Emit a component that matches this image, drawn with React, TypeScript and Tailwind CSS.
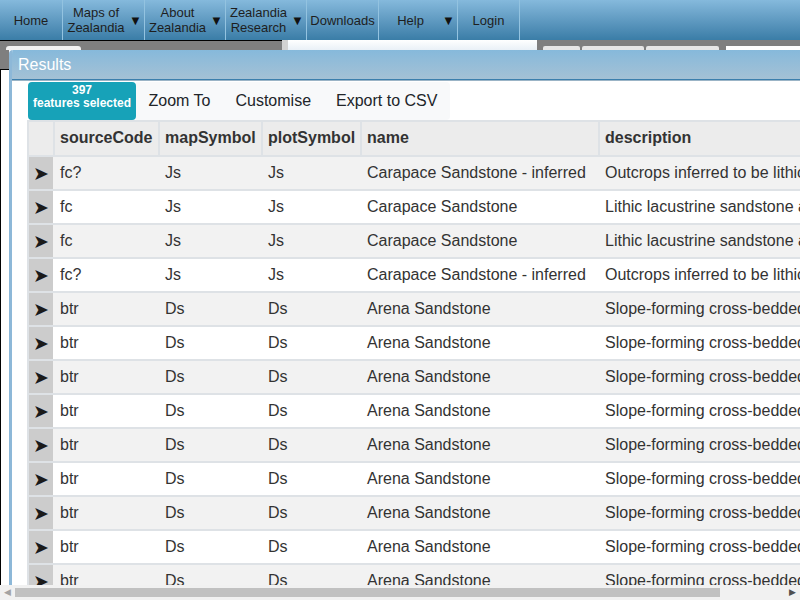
import React from "react";

type NavItem = { lines: string[]; arrow: boolean; width: string };

const navItems: NavItem[] = [
  { lines: ["Home"], arrow: false, width: "w-[63px]" },
  { lines: ["Maps of", "Zealandia"], arrow: true, width: "w-[82px]" },
  { lines: ["About", "Zealandia"], arrow: true, width: "w-[81px]" },
  { lines: ["Zealandia", "Research"], arrow: true, width: "w-[81px]" },
  { lines: ["Downloads"], arrow: false, width: "w-[72px]" },
  { lines: ["Help"], arrow: true, width: "w-[79px]" },
  { lines: ["Login"], arrow: false, width: "w-[62px]" },
];

type Row = { code: string; map: string; plot: string; name: string; desc: string };

const carapaceInf: Row = {
  code: "fc?",
  map: "Js",
  plot: "Js",
  name: "Carapace Sandstone - inferred",
  desc: "Outcrops inferred to be lithic lacustrine sandstone",
};
const carapace: Row = {
  code: "fc",
  map: "Js",
  plot: "Js",
  name: "Carapace Sandstone",
  desc: "Lithic lacustrine sandstone and conglomerate",
};
const arena: Row = {
  code: "btr",
  map: "Ds",
  plot: "Ds",
  name: "Arena Sandstone",
  desc: "Slope-forming cross-bedded sandstone",
};

const rows: Row[] = [
  carapaceInf,
  carapace,
  carapace,
  carapaceInf,
  ...Array.from({ length: 9 }, () => arena),
];

const cols = "grid grid-cols-[24px_103px_101px_97px_236px_480px] gap-[2px]";

function NavBar() {
  return (
    <nav className="flex h-[40px] shrink-0 bg-gradient-to-b from-[#85b9dc] to-[#3a7da7] text-[13px] leading-[15px] text-[#1e1e1e]">
      {navItems.map((item) => (
        <div
          key={item.lines.join(" ")}
          className={`${item.width} flex items-center border-r border-[#93c3e0]`}
        >
          <div className="flex flex-1 flex-col items-center justify-center">
            {item.lines.map((l) => (
              <span key={l}>{l}</span>
            ))}
          </div>
          {item.arrow && <span className="w-[15px] pr-[3px] text-[13px] text-[#111]">▼</span>}
        </div>
      ))}
    </nav>
  );
}

function SubStrip() {
  return (
    <div className="flex h-[10px] shrink-0">
      <div className="flex w-[282px] items-end border-t border-black bg-[#7f7f7f] pl-[6px]">
        <div className="h-[4px] w-[75px] rounded-t-[3px] bg-[#f2f2f2]" />
      </div>
      <div className="w-[6px] bg-[#d2d2d2]" />
      <div className="w-[249px] bg-gradient-to-b from-white to-[#e9f0f7]" />
      <div className="flex flex-1 items-end gap-[2px] bg-[#7f7f7f] pl-[6px]">
        <div className="h-[4px] w-[37px] rounded-t-[2px] bg-[#e6e6e6]" />
        <div className="h-[4px] w-[62px] rounded-t-[2px] bg-[#e6e6e6]" />
        <div className="h-[4px] w-[73px] rounded-t-[2px] bg-[#e6e6e6]" />
        <div className="ml-[5px] h-[4px] flex-1 bg-white" />
      </div>
    </div>
  );
}

function Toolbar() {
  return (
    <div className="flex h-[38px] shrink-0 items-stretch">
      <div className="flex w-[108px] flex-col items-center rounded-[4px] bg-[#17a2b8] pt-[2px] text-[12px] font-bold leading-[13px] text-white">
        <span>397</span>
        <span>features selected</span>
      </div>
      <div className="flex items-center rounded-r-[4px] bg-[#f8f9fa] text-[16px] text-[#212529]">
        <span className="px-[12.5px]">Zoom To</span>
        <span className="px-[12.5px]">Customise</span>
        <span className="px-[12.5px]">Export to CSV</span>
      </div>
    </div>
  );
}

function ResultsTable() {
  return (
    <div className="-ml-px w-max bg-[#dee2e6] p-[2px] text-[16px] text-[#333]">
      <div className={`${cols} h-[33px] font-bold`}>
        <div className="bg-[#ececec]" />
        {["sourceCode", "mapSymbol", "plotSymbol", "name", "description"].map((h) => (
          <div key={h} className="flex items-center bg-[#ececec] pb-px pl-[5px]">
            {h}
          </div>
        ))}
      </div>
      {rows.map((r, i) => (
        <div
          key={i}
          className={`${cols} mt-[2px] h-[32px] ${i % 2 === 0 ? "bg-[#f2f2f2]" : "bg-white"}`}
        >
          <div className="flex items-center justify-center bg-[#cccccc] font-['DejaVu_Sans',sans-serif] text-[19px] text-[#1a1a1a]">
            ➤
          </div>
          {[r.code, r.map, r.plot, r.name, r.desc].map((c, j) => (
            <div key={j} className="flex items-center whitespace-nowrap pl-[5px]">
              {c}
            </div>
          ))}
        </div>
      ))}
    </div>
  );
}

export default function App() {
  return (
    <div className="flex h-[600px] w-[800px] flex-col overflow-hidden bg-white font-['Liberation_Sans',Arial,sans-serif]">
      <NavBar />
      <SubStrip />
      <div className="flex min-h-0 flex-1">
        <div className="flex w-[9px] shrink-0 flex-col">
          <div className="h-[19px] bg-[#7f7f7f]" />
          <div className="h-px bg-black" />
          <div className="flex-1 border-l border-black bg-white" />
        </div>
        <div className="flex min-w-0 flex-1 flex-col overflow-hidden rounded-tl-[4px] border-l-[3px] border-[#8db8d8]">
          <div className="flex h-[29px] shrink-0 items-center bg-gradient-to-b from-[#86b9db] to-[#a4c1d5] pl-[6px] pt-px text-[16px] text-white">
            Results
          </div>
          <div className="h-px shrink-0 bg-[#3c7fad]" />
          <div className="h-px shrink-0 bg-[#9bb4c6]" />
          <div className="min-h-0 flex-1 overflow-hidden bg-white pl-[16px] pt-px">
            <Toolbar />
            <ResultsTable />
          </div>
        </div>
      </div>
      <div className="flex h-[15px] shrink-0 items-center bg-[#f1f1f1] text-[9px]">
        <span className="w-[15px] text-center text-[#a3a3a3]">◀</span>
        <div className="h-[9px] w-[705px] bg-[#c1c1c1]" />
        <span className="ml-auto w-[15px] text-center text-[#505050]">▶</span>
      </div>
    </div>
  );
}
